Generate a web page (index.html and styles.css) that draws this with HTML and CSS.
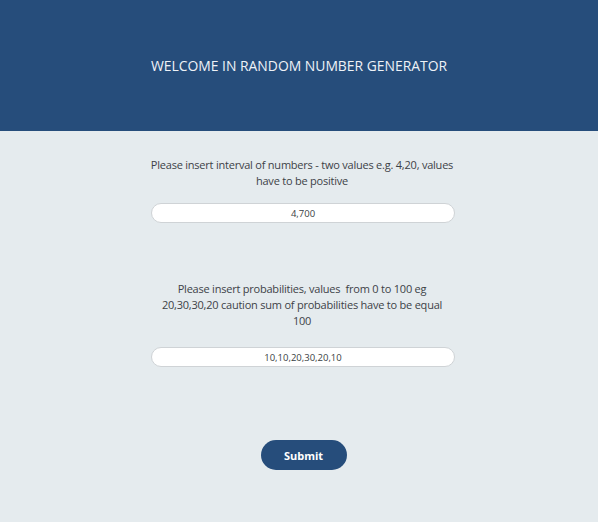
FILE: index.html
```html
<!DOCTYPE html>
<html>
<head>
<meta charset="utf-8">
<link rel="stylesheet" href="styles.css">
</head>
<body>
<header class="header">
  <h1 class="title">WELCOME IN RANDOM NUMBER GENERATOR</h1>
</header>
<main class="content">
  <section class="field">
    <p class="label">Please insert interval of numbers - two values e.g. 4,20, values<br>have to be positive</p>
    <input class="input" type="text" value="4,700">
  </section>
  <section class="field field-second">
    <p class="label">Please insert probabilities, values&nbsp; from 0 to 100 eg<br>20,30,30,20 caution sum of probabilities have to be equal<br>100</p>
    <input class="input" type="text" value="10,10,20,30,20,10">
  </section>
  <div class="actions">
    <button class="submit" type="button">Submit</button>
  </div>
</main>
</body>
</html>
```
FILE: styles.css
```css
html, body {
  margin: 0;
  padding: 0;
}
body {
  background: #e5ebee;
  font-family: "Open Sans", "Noto Sans", sans-serif;
  color: #3a3f44;
  height: 522px;
  overflow: hidden;
}
.header {
  background: #264d7b;
  height: 131px;
  display: flex;
  align-items: center;
  justify-content: center;
}
.title {
  margin: 0;
  font-weight: 400;
  font-size: 13.9px;
  color: #eef2f7;
  padding-bottom: 1px;
}
.content {
  width: 305px;
  margin-left: 151px;
  padding-top: 26px;
}
.field {
  display: flex;
  flex-direction: column;
}
.field-second {
  margin-top: 58px;
}
.label {
  margin: 0 -10px 0 -13px;
  font-size: 11px;
  letter-spacing: -0.22px;
  line-height: 16px;
  text-align: center;
  white-space: nowrap;
  color: #3d4247;
}
.input {
  margin-top: 14px;
  box-sizing: border-box;
  width: 304px;
  height: 20px;
  border: 1px solid #cfd3d6;
  border-radius: 10px;
  background: #fff;
  text-align: center;
  font-family: inherit;
  font-size: 9.5px;
  color: #3a3f44;
  padding: 0 8px;
  outline: none;
}
.field-second .input {
  margin-top: 18px;
}
.actions {
  display: flex;
  justify-content: center;
  margin-top: 73px;
}
.submit {
  width: 86px;
  height: 30px;
  border: none;
  border-radius: 15px;
  background: #264d7b;
  color: #fff;
  font-family: inherit;
  font-weight: 700;
  font-size: 11px;
  cursor: pointer;
}
```
